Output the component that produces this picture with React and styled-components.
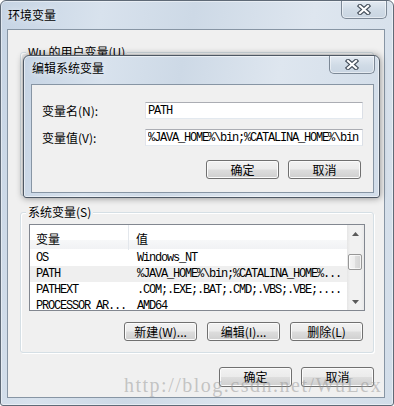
import React from 'react'
import styled, { createGlobalStyle } from 'styled-components';

const GlobalStyle = createGlobalStyle`
  body {
    margin: 0;
    background: #ffffff;
    overflow: hidden;
    font-family: "Noto Sans CJK SC", "Liberation Sans", sans-serif;
    font-size: 12px;
    color: #000;
  }
`;

const frameBg = `linear-gradient(100deg, #c6d4e4 0%, #d8e2ed 22%, #cdd9e6 42%, #dee6ef 68%, #d2dde9 100%)`;

const Window = styled.div`
  position: relative;
  width: 394px;
  height: 406px;
  box-sizing: border-box;
  border: 1px solid #5f6a77;
  border-radius: 6px 6px 3px 3px;
  background: ${frameBg};
  box-shadow: inset 0 0 0 1px rgba(255,255,255,0.45);
  display: flex;
  flex-direction: column;
  overflow: hidden;
`;

const TitleBar = styled.div`
  height: 28px;
  flex-shrink: 0;
  display: flex;
  justify-content: space-between;
  align-items: flex-start;
`;

const Caption = styled.div`
  padding: ${(p) => p.$top}px 0 0 ${(p) => p.$left}px;
  line-height: 14px;
  font-size: 12px;
  color: #000;
  text-shadow: 0 0 6px rgba(255,255,255,0.9);
`;

const CloseButton = styled.div`
  width: 46px;
  height: 18px;
  margin-right: ${(p) => p.$right}px;
  box-sizing: border-box;
  border: 1px solid #7c8896;
  border-top: none;
  border-radius: 0 0 5px 5px;
  background: linear-gradient(#e3eaf2, #d0dbe6 55%, #c9d5e2);
  box-shadow: inset 0 0 0 1px rgba(255,255,255,0.5);
  display: flex;
  align-items: center;
  justify-content: center;
`;

const Client = styled.div`
  flex: 1;
  margin: ${(p) => p.$margin};
  box-sizing: border-box;
  border: 1px solid #8795a4;
  background: #f0f0f0;
  padding: ${(p) => p.$padding};
  display: flex;
  flex-direction: column;
`;

const GroupBox = styled.div`
  height: ${(p) => p.$height}px;
  margin-top: ${(p) => p.$top || 0}px;
  box-sizing: border-box;
  border: 1px solid #d5dfe5;
  border-radius: 3px;
  box-shadow: inset 1px 1px 0 #fff, 1px 1px 0 #fff;
  padding: 0 8px 11px 8px;
  display: flex;
  flex-direction: column;
  flex-shrink: 0;
`;

const Legend = styled.div`
  align-self: flex-start;
  margin: -8px 0 0 -3px;
  padding: 0 2px;
  line-height: 14px;
  background: #f0f0f0;
`;

const ListView = styled.div`
  margin-top: 5px;
  height: 87px;
  box-sizing: border-box;
  border: 1px solid #828790;
  background: #fff;
  display: flex;
  overflow: hidden;
`;

const ListBody = styled.div`
  flex: 1;
  min-width: 0;
  display: flex;
  flex-direction: column;
  overflow: hidden;
`;

const Header = styled.div`
  display: grid;
  grid-template-columns: 99px 1fr;
  height: 25px;
  flex-shrink: 0;
  background: linear-gradient(#fff 0%, #fff 58%, #f7f8f9 58%, #f1f2f4 96%, #fff 96%);
`;

const HeaderCell = styled.div`
  display: flex;
  align-items: center;
  padding: 2px 0 0 ${(p) => p.$pad}px;
  font-size: 12px;
  border-right: ${(p) => (p.$divider ? '1px solid #e3e7ec' : 'none')};
`;

const Row = styled.div`
  display: grid;
  grid-template-columns: 99px 1fr;
  height: 16px;
  flex-shrink: 0;
  background: ${(p) => (p.$selected ? '#efefef' : 'transparent')};
`;

const monoText = `
  font-family: "Liberation Mono", "DejaVu Sans Mono", monospace;
  font-size: 12px;
  letter-spacing: -1.2px;
`;

const Cell = styled.div`
  ${monoText}
  line-height: 16px;
  padding-left: ${(p) => p.$pad}px;
  white-space: nowrap;
  overflow: hidden;
`;

const ScrollBar = styled.div`
  width: 17px;
  flex-shrink: 0;
  display: flex;
  flex-direction: column;
  background: linear-gradient(to right, #e6e6e6, #f1f1f1 20%, #f1f1f1 80%, #e9e9e9);
`;

const Arrow = styled.div`
  height: 17px;
  display: flex;
  align-items: center;
  justify-content: center;
`;

const Track = styled.div`
  flex: 1;
`;

const Thumb = styled.div`
  margin: 12px 2px 0 1px;
  height: 16px;
  box-sizing: border-box;
  border: 1px solid #979797;
  border-radius: 2px;
  background: linear-gradient(to right, #f4f4f4, #ececec 50%, #dedede 50%, #d4d4d4);
  box-shadow: inset 0 0 0 1px rgba(255,255,255,0.7);
`;

const ButtonRow = styled.div`
  display: flex;
  justify-content: flex-end;
  gap: ${(p) => p.$gap}px;
  margin-top: ${(p) => p.$top}px;
  padding-right: ${(p) => p.$right || 0}px;
  flex-shrink: 0;
`;

const Button = styled.button`
  width: 73px;
  height: ${(p) => p.$h}px;
  padding: 0;
  box-sizing: border-box;
  border: 1px solid #707070;
  border-radius: 3px;
  background: linear-gradient(#f2f2f2 0%, #ebebeb 48%, #dddddd 52%, #cfcfcf 100%);
  box-shadow: inset 0 0 0 1px #fbfbfb;
  font-family: "Noto Sans CJK SC", "Liberation Sans", sans-serif;
  font-size: 12px;
  line-height: 14px;
  color: #000;
`;

const Dialog = styled.div`
  position: absolute;
  left: 22px;
  top: 54px;
  width: 357px;
  height: 143px;
  box-sizing: border-box;
  border: 1px solid #4e5864;
  border-radius: 6px 6px 3px 3px;
  background: ${frameBg};
  box-shadow: 0 0 7px rgba(0,0,0,0.45), inset 0 0 0 1px rgba(255,255,255,0.5);
  display: flex;
  flex-direction: column;
`;

const FormGrid = styled.div`
  display: grid;
  grid-template-columns: 103px 1fr;
  row-gap: 10px;
  align-items: center;
`;

const Label = styled.div`
  font-size: 12px;
  line-height: 14px;
`;

const TextBox = styled.input`
  height: 17px;
  box-sizing: border-box;
  border: 1px solid;
  border-color: #abadb3 #dbdfe6 #e3e9ef #e2e3ea;
  background: #fff;
  padding: 0 2px;
  margin: 0;
  width: 100%;
  ${monoText}
  color: #000;
  outline: none;
`;

const Watermark = styled.div`
  position: absolute;
  left: 123px;
  top: 374px;
  font-family: "Liberation Serif", serif;
  font-size: 20px;
  line-height: 20px;
  letter-spacing: 1.5px;
  color: rgba(150,150,150,0.5);
  white-space: nowrap;
  pointer-events: none;
`;

function CloseX() {
  return (
    <svg width="14" height="11" viewBox="0 0 14 11">
      <path d="M3 2 L11 9 M11 2 L3 9" stroke="#46505c" strokeWidth="4.4" strokeLinecap="square" />
      <path d="M3 2 L11 9 M11 2 L3 9" stroke="#fff" strokeWidth="2.2" strokeLinecap="square" />
    </svg>
  );
}

function Triangle({ down }) {
  return (
    <svg width="7" height="4" viewBox="0 0 7 4">
      <path d={down ? 'M0 0 H7 L3.5 4 Z' : 'M0 4 H7 L3.5 0 Z'} fill="#5a5a5a" />
    </svg>
  );
}

const rows = [
  ['OS', 'Windows_NT'],
  ['PATH', '%JAVA_HOME%\\bin;%CATALINA_HOME%...'],
  ['PATHEXT', '.COM;.EXE;.BAT;.CMD;.VBS;.VBE;....'],
  ['PROCESSOR_AR...', 'AMD64'],
];

export default function App() {
  return (
    <>
      <GlobalStyle />
      <Window>
        <TitleBar>
          <Caption $top={7} $left={7}>环境变量</Caption>
          <CloseButton $right={6}><CloseX /></CloseButton>
        </TitleBar>
        <Client $margin="0 8px 7px 6px" $padding="22px 10px 10px 12px">
          <GroupBox $height={144}>
            <Legend>Wu 的用户变量(U)</Legend>
          </GroupBox>
          <GroupBox $height={141} $top={16}>
            <Legend>系统变量(S)</Legend>
            <ListView>
              <ListBody>
                <Header>
                  <HeaderCell $pad={6} $divider>变量</HeaderCell>
                  <HeaderCell $pad={7}>值</HeaderCell>
                </Header>
                {rows.map(([name, value]) => (
                  <Row key={name} $selected={name === 'PATH'}>
                    <Cell $pad={6}>{name}</Cell>
                    <Cell $pad={8}>{value}</Cell>
                  </Row>
                ))}
              </ListBody>
              <ScrollBar>
                <Arrow><Triangle /></Arrow>
                <Track><Thumb /></Track>
                <Arrow><Triangle down /></Arrow>
              </ScrollBar>
            </ListView>
            <ButtonRow $gap={10} $top={11} $right={2}>
              <Button $h={19}>新建(W)...</Button>
              <Button $h={19}>编辑(I)...</Button>
              <Button $h={19}>删除(L)</Button>
            </ButtonRow>
          </GroupBox>
          <ButtonRow $gap={9} $top={14}>
            <Button $h={20}>确定</Button>
            <Button $h={20}>取消</Button>
          </ButtonRow>
        </Client>

        <Dialog>
          <TitleBar>
            <Caption $top={5} $left={8}>编辑系统变量</Caption>
            <CloseButton $right={4}><CloseX /></CloseButton>
          </TitleBar>
          <Client $margin="0 5px 4px 7px" $padding="17px 10px 0 10px">
            <FormGrid>
              <Label>变量名(N):</Label>
              <TextBox readOnly defaultValue="PATH" />
              <Label>变量值(V):</Label>
              <TextBox readOnly defaultValue="%JAVA_HOME%\bin;%CATALINA_HOME%\bin" />
            </FormGrid>
            <ButtonRow $gap={9} $top={14} $right={2}>
              <Button $h={19}>确定</Button>
              <Button $h={19}>取消</Button>
            </ButtonRow>
          </Client>
        </Dialog>

        <Watermark>http://blog.csdn.net/WuLex</Watermark>
      </Window>
    </>
  );
}
